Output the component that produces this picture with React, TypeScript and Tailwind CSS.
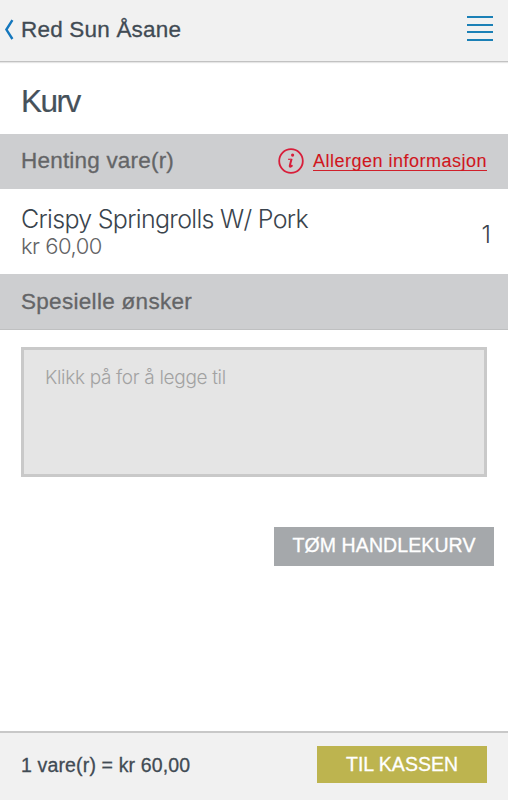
const medium = "font-['Liberation_Sans',Arial,sans-serif] [-webkit-text-stroke:0.3px_currentColor] whitespace-nowrap";
const light = "font-['Inter','Liberation_Sans',sans-serif] font-light whitespace-nowrap";

function BackIcon() {
  return (
    <svg width="10" height="22" viewBox="0 0 10 22" fill="none" stroke="#1477bd" strokeWidth="2.4">
      <path d="M8.4 1.2L2.4 10.6L8.4 20" />
    </svg>
  );
}

function InfoIcon() {
  return (
    <svg width="26" height="26" viewBox="0 0 26 26" fill="none" stroke="#d81e3a">
      <circle cx="13" cy="13" r="11.8" strokeWidth="1.8" />
      <circle cx="14.6" cy="7.1" r="1.6" fill="#d81e3a" stroke="none" />
      <path d="M10.1 11.3H12.6" strokeWidth="1.2" />
      <path d="M13.6 10.7L11.8 17.6Q11.6 19 12.7 18.6L14.5 17.3" strokeWidth="2" />
    </svg>
  );
}

export default function App() {
  return (
    <div className="flex h-[800px] w-[508px] flex-col overflow-hidden bg-white">
      <header className="flex h-[62px] shrink-0 items-start justify-between border-b border-[#c2c2c2] bg-[#f1f1f1] pl-1 pr-[15px] shadow-[0_1px_1px_#e6e6e6]">
        <div className="flex pt-[19px]">
          <BackIcon />
          <h1 className={`${medium} ml-[7px] text-[22.5px] leading-[22px] tracking-[0.2px] text-[#414b54]`}>Red Sun Åsane</h1>
        </div>
        <div className="mt-4 flex w-[26px] flex-col gap-[5.67px]">
          <i className="h-0.5 bg-[#1b80b6]" />
          <i className="h-0.5 bg-[#1b80b6]" />
          <i className="h-0.5 bg-[#1b80b6]" />
          <i className="h-0.5 bg-[#1b80b6]" />
        </div>
      </header>

      <main className="flex flex-1 flex-col">
        <div className="flex h-[72px] items-center pl-[21px] pt-[5px]">
          <h2 className="font-['Liberation_Sans',Arial,sans-serif] text-[31.5px] leading-8 tracking-[-1.5px] text-[#46515a] [-webkit-text-stroke:0.2px_currentColor]">Kurv</h2>
        </div>

        <section className="flex h-[55px] items-center justify-between bg-[#cdced0] px-[21px]">
          <h3 className={`${medium} pb-0.5 text-[22.5px] leading-6 tracking-[0.2px] text-[#646567]`}>Henting vare(r)</h3>
          <div className="flex items-center gap-[9px] pb-px">
            <InfoIcon />
            <a className="mt-0.5 border-b border-[#d0202a] font-['Liberation_Sans',Arial,sans-serif] text-[18px] leading-[17px] tracking-[0.5px] whitespace-nowrap text-[#d0161d] [-webkit-text-stroke:0.1px_currentColor]">Allergen informasjon</a>
          </div>
        </section>

        <section className="flex h-[85px] items-center justify-between pl-[21px] pr-[17px]">
          <div>
            <p className={`${light} text-[25px] leading-[30px] tracking-[-0.7px] text-[#3a444d]`}>Crispy Springrolls W/ Pork</p>
            <p className={`${light} text-[22px] leading-[25px] tracking-[-0.5px] text-[#626365]`}>kr 60,00</p>
          </div>
          <span className={`${light} pt-1.5 text-[24px] leading-6 text-[#3a444d]`}>1</span>
        </section>

        <section className="flex h-14 items-center border-b border-[#bfc0c1] bg-[#cdced0] pl-[21px]">
          <h3 className={`${medium} text-[22.5px] leading-6 tracking-[0.3px] text-[#646567]`}>Spesielle ønsker</h3>
        </section>

        <div className="mx-[21px] mt-[17px] h-[130px] border-[3px] border-[#c9c9c9] bg-[#e5e5e5] pl-[21px] pt-4">
          <p className={`${light} text-[19px] leading-6 tracking-[-0.32px] text-[#a2a2a2]`}>Klikk på for å legge til</p>
        </div>

        <button className={`${medium} mr-[14px] mt-[50px] flex h-[39px] w-[220px] items-center justify-center self-end bg-[#a5a8ab] pb-[3px] text-[19.5px] leading-5 tracking-[0.1px] text-white`}>TØM HANDLEKURV</button>
      </main>

      <footer className="flex h-[69px] shrink-0 items-start justify-between border-t-2 border-[#c8c8c8] bg-[#f1f1f1] px-[21px]">
        <p className={`${medium} pt-5 text-[19.5px] leading-6 tracking-[0.15px] text-[#414b54]`}>1 vare(r) = kr 60,00</p>
        <button className={`${medium} mt-[13px] flex h-[37px] w-[170px] items-center justify-center bg-[#bdb44f] pb-0.5 text-[19.5px] leading-5 text-white`}>TIL KASSEN</button>
      </footer>
    </div>
  );
}
